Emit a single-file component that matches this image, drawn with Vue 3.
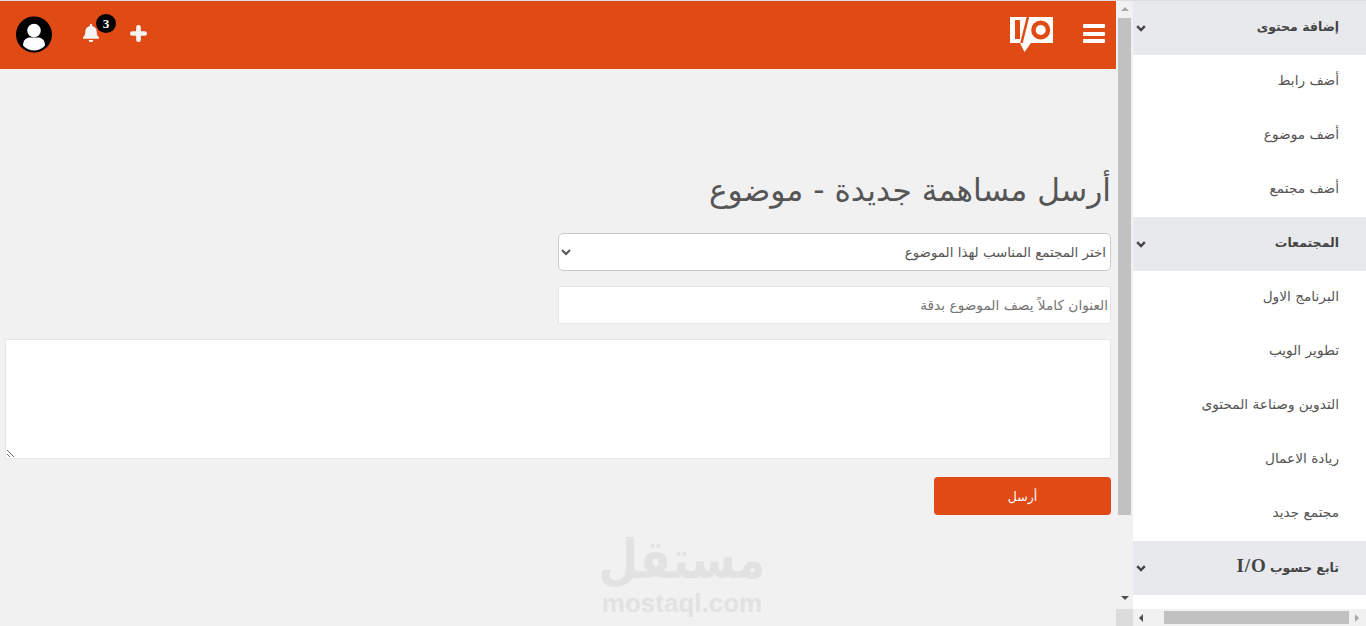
<template>
  <div class="page">
    <div class="main">
      <header class="topbar">
        <div class="top-left">
          <svg class="avatar" viewBox="0 0 36 38" width="36" height="38">
            <circle cx="18" cy="18.500" r="18" fill="#000" />
            <circle cx="18" cy="14.500" r="6.800" fill="#fff" />
            <path d="M7 29.500c0-6 4-8 7-8h8c3 0 7 2 7 8-3 3.500-7 5-11 5s-8-1.500-11-5z" fill="#fff" />
          </svg>
          <div class="bell-wrap">
            <svg class="bell" viewBox="0 0 448 512" width="16" height="18.300">
              <path fill="#f4f4f4" d="M224 512c35.32 0 63.97-28.65 63.97-64H160.03c0 35.35 28.65 64 63.97 64zm215.39-149.71c-19.32-20.76-55.47-51.99-55.47-154.29 0-77.7-54.48-139.9-127.94-155.16V32c0-17.67-14.32-32-31.98-32s-31.98 14.33-31.98 32v20.84C118.56 68.1 64.08 130.3 64.08 208c0 102.3-36.15 133.53-55.47 154.29-6 6.45-8.66 14.16-8.61 21.71.11 16.4 12.98 32 32.1 32h383.8c19.12 0 32-15.6 32.1-32 .05-7.55-2.61-15.27-8.61-21.71z" />
            </svg>
            <span class="badge">3</span>
          </div>
          <svg class="plus" viewBox="0 0 18 18" width="17" height="17">
            <path d="M9 2.500v13M2.500 9h13" stroke="#f4f4f4" stroke-width="5" stroke-linecap="round" />
          </svg>
        </div>
        <div class="top-right">
          <svg class="logo" viewBox="0 0 43 35" width="43" height="35">
            <path fill="#fff" d="M0 0h43v26H21l-6.500 9L10 26H0z" />
            <rect x="5" y="3" width="5" height="19" fill="#e04a14" />
            <path d="M18 0l-6.500 26" stroke="#e04a14" stroke-width="2.500" />
            <circle cx="30.700" cy="13" r="7.300" fill="#fff" stroke="#e04a14" stroke-width="4.500" />
          </svg>
          <div class="burger">
            <span></span>
            <span></span>
            <span></span>
          </div>
        </div>
      </header>

      <form class="post-form" dir="rtl" @submit.prevent>
        <h1>أرسل مساهمة جديدة - موضوع</h1>
        <select class="field select-field">
          <option>اختر المجتمع المناسب لهذا الموضوع</option>
        </select>
        <input class="field text-field" type="text" placeholder="العنوان كاملاً يصف الموضوع بدقة" />
        <textarea class="body-field"></textarea>
        <button class="send-btn" type="submit">أرسل</button>
      </form>

      <div class="watermark">
        <div class="wm-ar" dir="rtl">مستقل</div>
        <div class="wm-en">mostaql.com</div>
      </div>
    </div>

    <div class="vbar">
      <div class="vtrack">
        <i class="arrow up"></i>
        <div class="vthumb"></div>
        <i class="arrow down"></i>
      </div>
      <div class="corner"></div>
    </div>

    <aside class="side">
      <div class="side-body" dir="rtl">
        <template v-for="group in groups" :key="group.title">
          <div class="side-head">
            <span class="side-title">{{ group.title }}<b v-if="group.mark" class="io">{{ group.mark }}</b></span>
            <svg viewBox="0 0 10 7" width="10" height="7">
              <path d="M1.200 1.200L5 5l3.800-3.800" fill="none" stroke="#444" stroke-width="2.400" />
            </svg>
          </div>
          <a v-for="item in group.items" :key="item" class="side-item">{{ item }}</a>
        </template>
      </div>
      <div class="hbar">
        <i class="arrow left"></i>
        <div class="hspace"><div class="hthumb"></div></div>
        <i class="arrow right"></i>
      </div>
    </aside>
  </div>
</template>

<script setup>
const groups = [
  { title: 'إضافة محتوى', items: ['أضف رابط', 'أضف موضوع', 'أضف مجتمع'] },
  {
    title: 'المجتمعات',
    items: ['البرنامج الاول', 'تطوير الويب', 'التدوين وصناعة المحتوى', 'ريادة الاعمال', 'مجتمع جديد']
  },
  { title: 'تابع حسوب', mark: 'I/O', items: [] }
]
</script>

<style>
html,
body {
  margin: 0;
  overflow: hidden;
  background: #f1f1f1;
}
</style>

<style scoped>
.page {
  display: flex;
  box-sizing: border-box;
  width: 1366px;
  height: 626px;
  border-top: 1px solid #dcdee2;
  overflow: hidden;
  font-family: "DejaVu Sans", "Noto Sans", sans-serif;
  color: #555;
}

.main {
  position: relative;
  width: 1116px;
  flex-shrink: 0;
  background: #f1f1f1;
}

.topbar {
  height: 68px;
  background: #e04a14;
  display: flex;
  justify-content: space-between;
  align-items: flex-start;
}

.top-left {
  display: flex;
  align-items: flex-start;
  padding: 15px 0 0 16px;
}

.bell-wrap {
  position: relative;
  margin: 8px 0 0 31px;
  width: 16px;
  height: 19px;
}

.bell,
.avatar,
.plus,
.logo {
  display: block;
}

.badge {
  position: absolute;
  top: -10px;
  left: 13px;
  width: 20px;
  height: 19px;
  border-radius: 50%;
  background: #000;
  color: #fff;
  font: bold 13px/19px "Liberation Serif", serif;
  text-align: center;
}

.plus {
  margin: 9px 0 0 31px;
}

.top-right {
  display: flex;
  align-items: flex-start;
  padding: 16px 11px 0 0;
}

.burger {
  margin: 7px 0 0 30px;
  width: 22px;
  display: flex;
  flex-direction: column;
  gap: 3.500px;
}

.burger span {
  height: 4px;
  background: #fff;
  border-radius: 1px;
}

.post-form {
  display: flex;
  flex-direction: column;
  align-items: flex-start;
  padding: 99px 5px 0;
}

h1 {
  margin: 0 0 21px;
  font-size: 31.300px;
  line-height: 44px;
  font-weight: 400;
  color: #555;
}

.field {
  box-sizing: border-box;
  width: 553px;
  height: 38px;
  font-family: inherit;
  color: #555;
  background: #fff;
}

.select-field {
  border: 1px solid #ccc;
  border-radius: 5px;
  padding: 0;
  margin-bottom: 15px;
  font-size: 13.400px;
}

.text-field {
  border: 1px solid #e6e6e6;
  padding: 0 2px;
  margin-bottom: 15px;
  outline: none;
  font-size: 13.700px;
}

.text-field::placeholder {
  color: #757575;
}

.body-field {
  box-sizing: border-box;
  width: 1106px;
  height: 120px;
  border: 1px solid #e6e6e6;
  background: #fff;
  padding: 2px;
  margin: 0 0 18px;
  display: block;
  outline: none;
}

.send-btn {
  width: 177px;
  height: 38px;
  border: none;
  border-radius: 4px;
  background: #e04a14;
  color: #fff;
  font-family: inherit;
  font-size: 12.500px;
}

.watermark {
  position: absolute;
  left: 600px;
  top: 529px;
  width: 164px;
  color: #e2e2e2;
  text-align: center;
}

.wm-ar {
  display: flex;
  justify-content: center;
  white-space: nowrap;
  font-size: 54px;
  line-height: 60px;
  font-weight: 700;
  transform: scaleX(0.845);
}

.wm-en {
  font-family: "Liberation Sans", sans-serif;
  font-size: 26px;
  line-height: 26px;
  font-weight: 700;
}

.vbar {
  width: 17px;
  flex-shrink: 0;
  display: flex;
  flex-direction: column;
  background: #f1f1f1;
}

.vtrack {
  flex: 1;
  display: flex;
  flex-direction: column;
  align-items: center;
  padding: 6px 0 0;
}

.vthumb {
  width: 13px;
  height: 497px;
  margin: 7px 0 81px;
  background: #c1c1c1;
}

.corner {
  height: 17px;
  background: #dcdcdc;
}

.arrow {
  display: block;
  width: 0;
  height: 0;
  flex-shrink: 0;
  border-style: solid;
  border-color: transparent;
}

.arrow.up {
  border-width: 0 4px 4px;
  border-bottom-color: #a8a8a8;
}

.arrow.down {
  border-width: 4px 4px 0;
  border-top-color: #505050;
}

.arrow.left {
  border-width: 4px 4px 4px 0;
  border-right-color: #505050;
}

.arrow.right {
  border-width: 4px 0 4px 4px;
  border-left-color: #a8a8a8;
}

.side {
  flex: 1;
  display: flex;
  flex-direction: column;
  background: #fff;
}

.side-body {
  flex: 1;
}

.side-head {
  height: 54px;
  background: #e8e9ed;
  display: flex;
  align-items: center;
  justify-content: space-between;
  padding: 0 27px 0 3px;
  box-sizing: border-box;
  font-size: 12.500px;
  font-weight: 700;
  color: #444;
}

.side-title {
  padding-bottom: 4px;
}

.side-item {
  display: block;
  height: 54px;
  line-height: 50px;
  padding-right: 27px;
  font-size: 13.700px;
  color: #555;
}

.io {
  margin-right: 3px;
  font-family: "Liberation Serif", serif;
  font-size: 19px;
  letter-spacing: 1px;
}

.hbar {
  height: 17px;
  display: flex;
  align-items: center;
  background: #f1f1f1;
  padding: 0 7px 0 6px;
}

.hspace {
  flex: 1;
  padding: 0 6px 0 21px;
}

.hthumb {
  height: 13px;
  background: #c1c1c1;
}
</style>
